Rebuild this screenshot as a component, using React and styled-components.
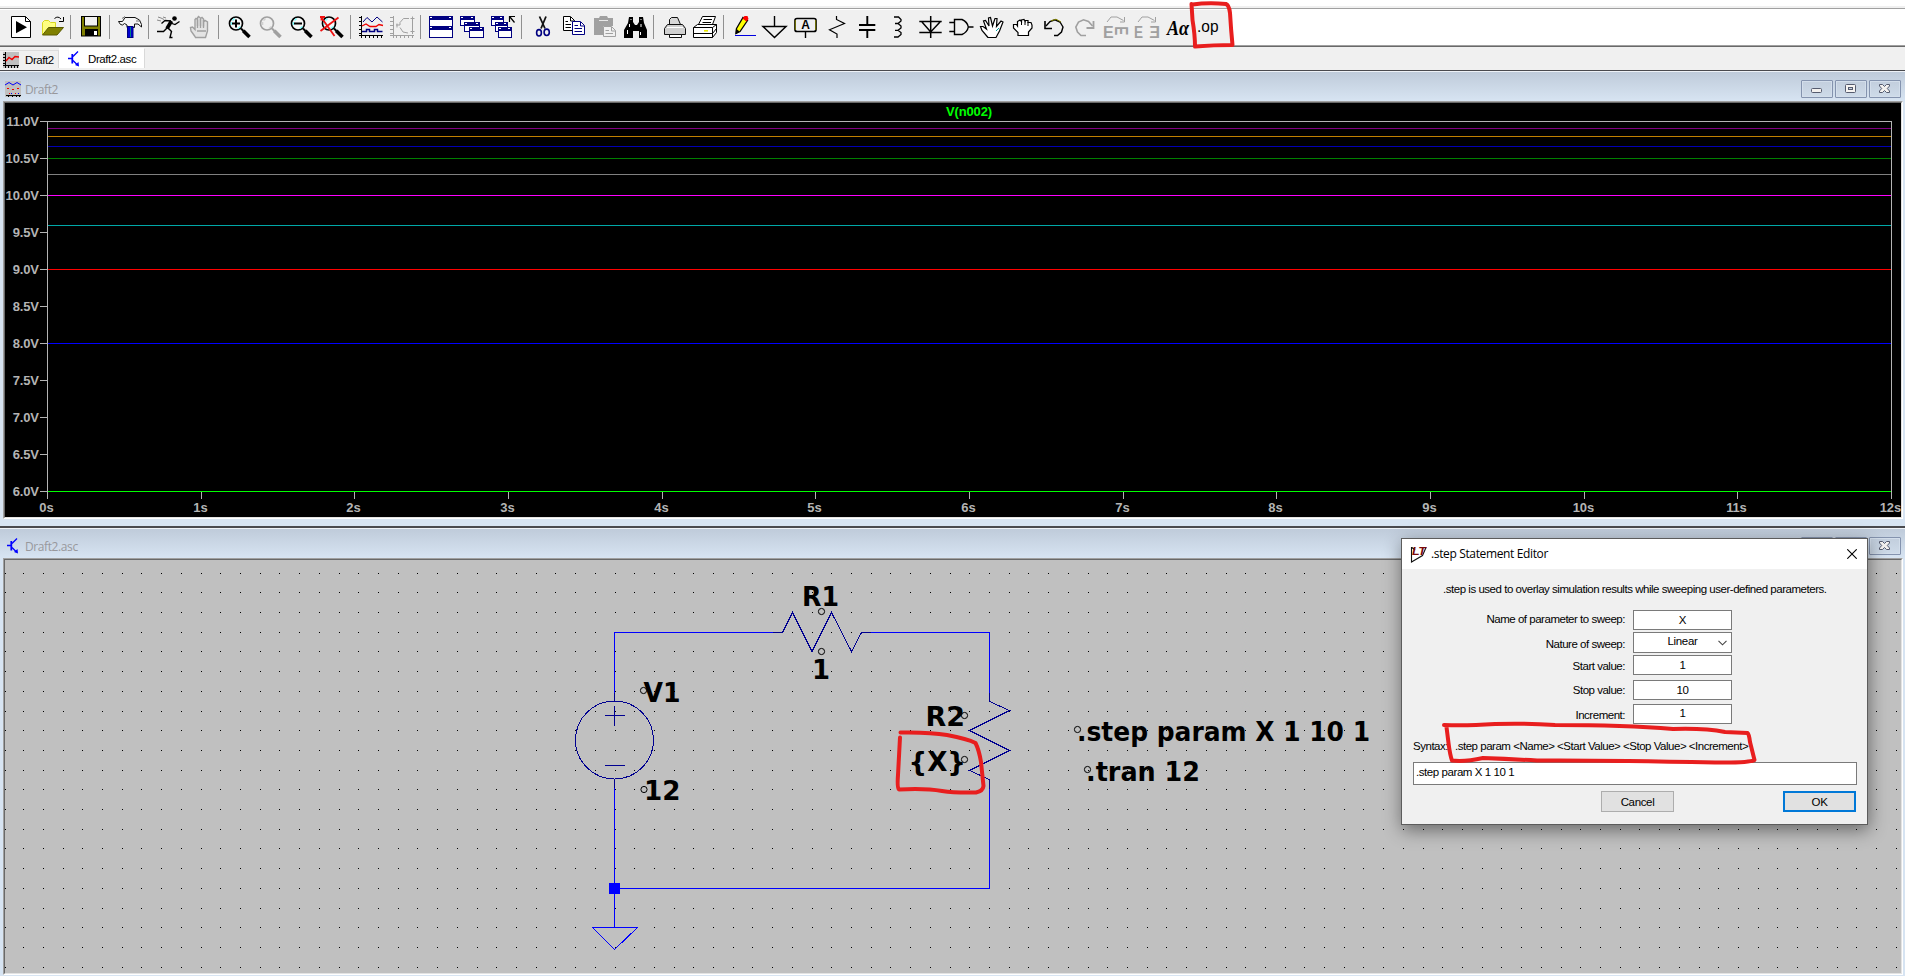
import React from "react";
import styled, { createGlobalStyle } from "styled-components";

const GlobalStyle = createGlobalStyle`
  * { box-sizing: border-box; }
  html, body { margin: 0; padding: 0; overflow: hidden; }
  body { font-family: "Liberation Sans", Arial, sans-serif; font-size: 11.5px; color: #000; background: #fff; }
  svg { display: block; }
`;

/* ---------- frame ---------- */

const Screen = styled.div`
  position: relative;
  width: 1905px;
  height: 976px;
  overflow: hidden;
  display: flex;
  flex-direction: column;
  background: #fff;
`;

const MenuEdge = styled.div`
  height: 9px;
  flex: none;
  border-top: 6px solid #fff;
  border-bottom: 1px solid #a0a0a0;
  background: #f0f0f0;
`;

const ToolbarRow = styled.div`
  height: 38px;
  flex: none;
  display: flex;
  background: #fff;
  border-top: 1px solid #fff;
  border-bottom: 1px solid #696969;
  box-shadow: inset 0 -1px 0 #a0a0a0;
`;

const Toolbar = styled.div`
  width: 1231px;
  height: 35px;
  padding: 4px 0 0 4px;
  display: flex;
  background: #f0f0f0;
`;

const ToolButton = styled.div`
  width: 31px;
  height: 26px;
  flex: none;
`;

const Divider = styled.div`
  width: 8px;
  height: 24px;
  flex: none;
  margin-top: 1px;
  background: linear-gradient(#909090, #909090) 4px 0 / 1px 100% no-repeat;
`;

const TabBar = styled.div`
  height: 23px;
  flex: none;
  display: flex;
  align-items: flex-start;
  background: #f0f0f0;
`;

const Tab = styled.div`
  display: flex;
  align-items: center;
  width: ${(p) => p.$width}px;
  height: ${(p) => (p.$active ? 20 : 18)}px;
  margin-top: ${(p) => (p.$active ? 1 : 3)}px;
  padding-left: ${(p) => (p.$active ? 9 : 3)}px;
  gap: ${(p) => (p.$active ? 8 : 6)}px;
  background: ${(p) => (p.$active ? "#fff" : "#f0f0f0")};
  border-top: 1px solid ${(p) => (p.$active ? "#fff" : "#dcdcdc")};
  border-right: 1px solid #d9d9d9;
  letter-spacing: -0.42px;
  line-height: 16px;
  white-space: nowrap;
`;

/* ---------- child windows ---------- */

const ChildWindow = styled.section`
  height: ${(p) => p.$height}px;
  flex: none;
  display: flex;
  flex-direction: column;
  border-top: ${(p) => p.$edge}px solid #4a4a4e;
  background: #d7e4f2;
`;

const TitleBar = styled.header`
  height: 30px;
  flex: none;
  display: flex;
  align-items: flex-start;
  padding: 9px 4px 0 5px;
  border-top: 1px solid #eef2f7;
  background: linear-gradient(#bfcbda, #d7e4f2);
`;

const TitleText = styled.span`
  flex: 1;
  margin: 0 0 0 4px;
  font-family: "Open Sans", "Noto Sans", sans-serif;
  font-size: 12px;
  line-height: 18px;
  letter-spacing: -0.4px;
  color: #98989c;
`;

const WindowButtons = styled.div`
  display: flex;
  gap: 2px;
  margin-top: -1px;
`;

const WindowButton = styled.div`
  width: 32px;
  height: 18px;
  display: flex;
  align-items: center;
  justify-content: center;
  border: 1px solid #8493ae;
  border-radius: 1px;
  box-shadow: inset 0 0 0 1px #d3deeb;
  background: linear-gradient(#c2cedd, #cedbe9);
`;

const Client = styled.div`
  width: 1900px;
  height: ${(p) => p.$height}px;
  margin-left: 3px;
  border: 1px solid;
  border-color: #a0a0a0 #fff #fff #a0a0a0;
  background: ${(p) => p.$fill};
`;

const ClientInner = styled.div`
  height: 100%;
  border: 1px solid;
  border-color: #696969 #e3e3e3 #e3e3e3 #696969;
  overflow: hidden;
`;

/* ---------- dialog ---------- */

const Dialog = styled.div`
  position: absolute;
  left: 1401px;
  top: 538px;
  width: 467px;
  height: 287px;
  display: flex;
  flex-direction: column;
  border: 1px solid #5c5c5c;
  background: #f0f0f0;
  box-shadow: 1px 5px 17px rgba(0, 0, 0, 0.46);
`;

const DialogTitle = styled.div`
  height: 30px;
  flex: none;
  display: flex;
  align-items: center;
  padding: 0 10px 0 8px;
  background: #fff;
  font-family: "Open Sans", "Noto Sans", sans-serif;
  font-size: 12px;
  letter-spacing: -0.36px;
`;

const DialogName = styled.span`
  flex: 1;
  margin-left: 4px;
  line-height: 18px;
  padding-bottom: 1px;
`;

const DialogBody = styled.div`
  flex: 1;
  display: flex;
  flex-direction: column;
  padding: 12px 10px 0 11px;
  line-height: 16px;
`;

const Hint = styled.p`
  margin: 0 0 13px 30px;
  letter-spacing: -0.47px;
  white-space: nowrap;
`;

const Field = styled.div`
  display: flex;
  justify-content: flex-start;
  align-items: center;
  gap: 8px;
  height: ${(p) => p.$height}px;
  margin-bottom: ${(p) => p.$after}px;
`;

const FieldLabel = styled.label`
  width: 212px;
  text-align: right;
  letter-spacing: -0.48px;
  padding-top: ${(p) => Math.max(p.$drop, 0)}px;
  padding-bottom: ${(p) => Math.max(-p.$drop, 0)}px;
`;

const FieldBox = styled.div`
  position: relative;
  width: 99px;
  height: 100%;
  border: 1px solid #7a7a7a;
  background: #fff;
  text-align: center;
  letter-spacing: -0.3px;
  line-height: ${(p) => p.$line}px;
`;

const Chevron = styled.svg`
  position: absolute;
  right: 4px;
  top: 7px;
`;

const Syntax = styled.div`
  display: flex;
  gap: 7px;
  margin-top: 10px;
  letter-spacing: -0.48px;
  white-space: nowrap;
`;

const Statement = styled.div`
  height: 23px;
  margin-top: 8px;
  padding: 0 2px;
  border: 1px solid #7a7a7a;
  background: #fff;
  line-height: 18px;
  letter-spacing: -0.43px;
`;

const Actions = styled.div`
  display: flex;
  gap: 109px;
  margin: 6px 1px 0 188px;
`;

const PushButton = styled.button`
  width: 73px;
  height: 21px;
  padding: 0;
  font: inherit;
  line-height: 16px;
  letter-spacing: -0.35px;
  color: #000;
  border: ${(p) => (p.$primary ? "2px solid #0078d7" : "1px solid #adadad")};
  background: #e1e1e1;
`;

const Markup = styled.svg`
  position: absolute;
  left: 0;
  top: 0;
  pointer-events: none;
`;

/* ---------- toolbar drawings ---------- */

const G = "#a0a0a0";
const N = "#000080";

const Glass = ({ c = "#000", shine = "#7fffff", children }) => (
  <>
    <circle cx="14" cy="9.5" r="6.5" fill={c === G ? "none" : "#f8f8f8"} stroke={c} strokeWidth="1.7" />
    <path d="M9.5 11V8M10.5 6.5l2-2M16 14.5l2.5-2" stroke={shine} strokeWidth="1.6" fill="none" />
    <path d="M19 14.5l2.5 2.5" stroke={c} strokeWidth="2" />
    <path d="M21.2 16.7L27.5 23" stroke={c} strokeWidth="3.6" />
    {children}
  </>
);

const MiniWindow = ({ x, y, w = 15, h = 10 }) => (
  <g>
    <rect x={x + 0.5} y={y + 0.5} width={w - 1} height={h - 1} fill="#fff" stroke={N} />
    <rect x={x} y={y} width={w} height="4" fill={N} />
    <rect x={x + 1} y={y + 1} width="2" height="1" fill="#fff" />
    <rect x={x + w - 4} y={y + 1} width="2" height="1" fill="#fff" />
  </g>
);

const tools = [
  [
    <>
      <path d="M7.5 2.5H21.5L26.5 7.5V23.5H7.5Z" fill="#fff" stroke="#000" />
      <path d="M21.5 2.5V7.5H26.5" fill="none" stroke="#000" />
      <path d="M12 7L23 13.2L12 19.3Z" />
    </>,
    <>
      <path d="M7.5 20.5V8.5L9.5 6.5H13.5L15.5 8.5H20.5V13" fill="#ffff80" stroke="#d8d820" />
      <path d="M7.5 21L13.5 13.5H28.5L22 21Z" fill="#808000" stroke="#5a5a00" />
      <path d="M19.5 4.5Q23 1.5 26 5M28.5 3V7.5H24" fill="none" stroke="#000" />
    </>,
  ],
  [
    <>
      <rect x="7.5" y="2.5" width="19" height="19.5" fill="#808000" stroke="#000" />
      <rect x="10.5" y="2.5" width="13" height="9.5" fill="#f0f0f0" stroke="#000" />
      <rect x="11" y="15" width="13" height="7" />
      <rect x="20" y="17" width="3" height="4" fill="#fff" />
    </>,
  ],
  [
    <>
      <path d="M5.5 7.5H9.5L12 3.5H22L26.5 6L28.5 10.5V13L25 10H21.5V13.5H14V11L11.5 9.5L9.5 11L7.5 10.5Z" fill="#f4f4f4" stroke="#111" />
      <path d="M9 4.5l3-2M23 7h4" stroke="#777" />
      <rect x="14.5" y="12.5" width="5.5" height="11" fill="#0000d0" stroke={N} />
      <path d="M17.5 13v10" stroke="#008080" />
    </>,
  ],
  [
    <>
      <circle cx="22.5" cy="4.5" r="2.3" />
      <path d="M19.5 7L15 14.5" stroke="#000" strokeWidth="3.6" />
      <path d="M19 7L13 6.5L9.5 9.5M18.5 9L23 10.5L27.5 7.5" fill="none" stroke="#000" strokeWidth="1.3" />
      <path d="M15 14L11.5 17.5H5M16 14L19.5 17.5L18 23.5H20.5" fill="none" stroke="#000" strokeWidth="1.4" />
      <path d="M6 3l3 1l3 1.5M5 6l4 1M11 3l3 1" fill="none" stroke="#888" />
    </>,
    <>
      <path d="M12 22.5L8 17L7.5 13.5L9.5 13L12 15.5V5.5L13 4.5L14.5 5.5V12V4L15.5 2.5L17.5 4V12V4.5L19 3.5L20.5 5V12.5V8L22 6.5L24.5 8V17L22.5 23.5H12.5Z" fill="#e4e4e4" stroke={G} strokeWidth="1.4" />
      <path d="M14.5 6v8M17.5 5v9M20.5 6v8M14 17h9" stroke={G} strokeWidth="1.3" />
    </>,
  ],
  [
    <Glass><path d="M10 9.5h8M14 5.5v8" stroke="#000" strokeWidth="2" /></Glass>,
    <Glass c={G} shine="#d0d0d0" />,
    <Glass><path d="M10 9.5h8" stroke="#000" strokeWidth="2" /></Glass>,
    <Glass>
      <path d="M6 3L19.5 22M23.5 3.5L5.5 17M6.5 2.5v4M5 3h5" stroke="#ee1111" strokeWidth="1.8" fill="none" />
    </Glass>,
  ],
  [
    <>
      <path d="M7.5 2V24M5 3.5H8M5 7.5H8M5 11.5H8M5 15.5H8M5 19.5H8M5 21.5H29M11.5 21V24M15.5 21V24M19.5 21V24M23.5 21V24M27.5 21V24" stroke="#000" fill="none" />
      <path d="M9 8L13 3.5L18 8L23 3L28.5 8" stroke={N} fill="none" />
      <path d="M8 12L12 10L16 12.5H22L25 10.5L29 11.5" stroke="#ee0000" fill="none" strokeWidth="1.3" />
      <path d="M8 17.5H12.5V15.5H15.5V17.5H20.5V15.5H23.5V17.5H28.5" stroke={N} fill="none" strokeWidth="1.5" />
    </>,
    <>
      <path d="M8.5 2V24M5 3.5H8M5 7.5H8M5 11.5H8M5 15.5H8M5 19.5H8M5 21.5H29M11.5 21V24M15.5 21V24M19.5 21V24M23.5 21V24M27.5 21V24" stroke={G} fill="none" />
      <path d="M27.5 2.5V20M25.5 4.5h4M25.5 17.5h4M11 11H15V8.5L18.5 4.5H24M15 13.5L18 18L23 19M12 9.5v4" stroke={G} fill="none" />
    </>,
  ],
  [
    <>
      <MiniWindow x={5} y={2} w={24} h={11} />
      <MiniWindow x={5} y={12} w={24} h={12} />
    </>,
    <>
      <MiniWindow x={5} y={2} />
      <MiniWindow x={9} y={8} w={16} />
      <MiniWindow x={14} y={13} w={15} h={11} />
    </>,
    <>
      <MiniWindow x={5} y={2} w={13} />
      <MiniWindow x={9} y={8} w={13} />
      <MiniWindow x={12} y={13} w={14} h={11} />
      <path d="M23.5 8V2.5H29M24 3L28.5 8.5" stroke="#000" fill="none" strokeWidth="1.2" />
    </>,
  ],
  [
    <>
      <path d="M14.5 2.5L20 14.5M21 2.5L16 14.5" stroke="#111" strokeWidth="1.8" />
      <ellipse cx="14" cy="18.8" rx="2.4" ry="3.2" fill="none" stroke={N} strokeWidth="1.6" />
      <ellipse cx="21.7" cy="18.3" rx="2.6" ry="3.2" fill="none" stroke={N} strokeWidth="1.6" />
    </>,
    <>
      <path d="M7.5 2.5H14.5L18.5 6.5V16.5H7.5Z" fill="#fff" stroke="#000" />
      <path d="M9.5 7.5H12M9.5 10.5H15M9.5 13.5H15M14.5 3v4h4" stroke="#000" fill="none" />
      <path d="M16.5 7.5H24.5L28.5 11.5V20.5H16.5Z" fill="#fff" stroke={N} />
      <path d="M18.5 11.5H22M18.5 14.5H26M18.5 17.5H26M24.5 8v4h4" stroke={N} fill="none" />
    </>,
    <>
      <path d="M7 4H12L13 2H20L21 4H26V12H16V21H7Z" fill={G} />
      <path d="M12 6.5H21" stroke="#e8e8e8" />
      <path d="M16.5 12.5H24.5L28.5 16.5V22.5H16.5Z" fill="#f0f0f0" stroke={G} />
      <path d="M18.5 16.5H22M18.5 19.5H26M24.5 13v4h4" stroke={G} fill="none" />
    </>,
    <>
      <path d="M11 3H15V8L17 11H19L21 8V3H25L26 9L29 16V24H21V17H15V24H6V16L10 9Z" />
      <path d="M12.5 5.5h1M22.5 5.5h1M11.5 10v3M9.5 16v4M23 10v3M22.5 18v3" stroke="#fff" />
    </>,
  ],
  [
    <>
      <path d="M12.5 10.5V5.5L14.5 3.5H20.5L23.5 10.5" fill="#d8d8d8" stroke="#111" />
      <path d="M10.5 10.5H25.5L28.5 14.5V20.5H7.5V14.5Z" fill="#d0d0d0" stroke="#111" />
      <path d="M10 13.5h16" stroke="#fff" />
      <path d="M12.5 20.5H24.5V23.5H12.5Z" fill="#fff" stroke="#111" />
    </>,
    <>
      <path d="M10.5 10.5L14.5 2.5H27.5L24.5 10.5" fill="#fff" stroke="#000" />
      <path d="M15.5 5.5H24M14.5 8.5H23" stroke="#000" />
      <path d="M5.5 13.5L9.5 10.5H28.5V18.5L24.5 23.5H5.5Z" fill="#fff" stroke="#000" />
      <path d="M5.5 13.5H24.5V23.5M24.5 13.5L28.5 10.5M5.5 19.5H24.5L28.5 14.5" fill="none" stroke="#000" />
      <path d="M16 16.8H20" stroke="#e8e800" strokeWidth="1.6" />
    </>,
  ],
  [
    <>
      <path d="M9.5 14.5L16 3.5L20.5 6.5L13 17.5L9 19.5Z" fill="#ffff00" stroke="#000" strokeWidth="1.3" />
      <path d="M15.5 4.5L17.5 2H20.5L21.5 5L19.5 7.5Z" fill="#ff0000" />
      <path d="M9 14.5L12.5 17.5L8.5 20.5Z" />
      <path d="M8 21.5H29" stroke="#0000e0" />
    </>,
    <>
      <path d="M16.5 2V12.5" stroke="#000" strokeWidth="1.4" />
      <path d="M5 12.5H28L16.5 23.5Z" fill="none" stroke="#000" strokeWidth="1.5" />
    </>,
    <>
      <rect x="6" y="4.5" width="21" height="13" rx="2" fill="#f0f0f0" stroke="#000" strokeWidth="1.7" />
      <path d="M6.3 6v10M26.7 6v10" stroke="#808000" />
      <text x="16.5" y="15.3" fontSize="12" fontWeight="bold" textAnchor="middle">A</text>
      <path d="M16.5 18V24" stroke="#000" strokeWidth="1.4" />
    </>,
    <path d="M16.5 2V5.5L24.5 9.5L9.5 15.8L17 20V24" fill="none" stroke="#000" strokeWidth="1.2" />,
    <path d="M16.3 2V11M16.3 16V24M8 11H24.3M8 16H24.3" fill="none" stroke="#000" strokeWidth="1.9" />,
    <path d="M12 3H16.5L19 5.5V7L16 9.5H13H16L19 12V14L16 16.3H13H16L19 18.5V20.5L16 23H12" fill="none" stroke="#000" strokeWidth="1.3" />,
    <path d="M17.7 2V24M6.3 7.5H28.7M9 8L17.7 18L27 8M6.3 18.5H28.7" fill="none" stroke="#000" strokeWidth="1.5" />,
    <path d="M10.5 5.5H18Q23.5 8 24.3 13Q23.5 18 18 20.5H10.5ZM5.3 8.5H10.5M5.3 17.5H10.5M24.3 13H29.5" fill="none" stroke="#000" strokeWidth="1.4" />,
    <>
      <path d="M13 23.5L7 16.5L5.5 12.5H8L11.5 15L8.5 7L10.5 6.5L14 12L13.5 4L15.5 3.5L17.5 12L20 4.5L22 4.5L21.5 12.5L26 7L28 8L24.5 17L21 23.5Z" fill="#fff" stroke="#000" strokeWidth="1.2" />
      <path d="M21 17l3-3" stroke="#00a0a0" />
    </>,
    <>
      <path d="M12 21.5V18.5L7.5 14V10.5H10.5L11.5 12V7.5L14 6L15.5 7.5V6L18 5.5L19 7V6.5L22 6.5V8.5L25 8.5L26 11V14L22.5 18V21.5Z" fill="#fff" stroke="#000" strokeWidth="1.2" />
      <path d="M15.5 7v4M19 7v4M22 8v4" stroke="#000" />
    </>,
    <>
      <path d="M9 12L13 7.5L18 5.8L23 8L26 13L24.5 18L20.5 21.5H17" fill="none" stroke="#000" strokeWidth="1.4" />
      <path d="M14 6.8L19 5.2L24 8" fill="none" stroke="#808000" />
      <path d="M8 7V14.5H15" fill="none" stroke="#000" strokeWidth="1.6" />
    </>,
    <>
      <path d="M24.5 12L20.5 7.5L15.5 5.8L10.5 8L7.8 13L9.5 18L13 21.5H18" fill="none" stroke={G} strokeWidth="1.6" />
      <path d="M25.5 7V14H18.5" fill="none" stroke={G} strokeWidth="1.8" />
    </>,
    <>
      <path d="M8 8L12 3H18L24.5 6.5M25.5 3V8H21" fill="none" stroke={G} />
      <text x="4" y="23.5" fontSize="16" fontWeight="bold" fill={G}>E</text>
      <text transform="translate(15.6 12.2) scale(1 .75) rotate(90)" x="0" y="0" fontSize="18" fontWeight="bold" fill={G}>E</text>
    </>,
    <>
      <path d="M8 8L12 3H18L24.5 6.5M25.5 3V8H21" fill="none" stroke={G} />
      <text x="4" y="23.5" fontSize="16" fontWeight="bold" fill={G} textLength="9" lengthAdjust="spacingAndGlyphs">E</text>
      <text transform="scale(-1 1)" x="-30" y="23.5" fontSize="16" fontWeight="bold" fill={G}>E</text>
    </>,
    <text x="6" y="20.8" fontFamily="Liberation Serif, serif" fontSize="20" fontWeight="bold" fontStyle="italic" textLength="22" lengthAdjust="spacingAndGlyphs">Aα</text>,
    <text x="5" y="18" fontFamily="Liberation Sans, sans-serif" fontSize="16" textLength="21.5" lengthAdjust="spacingAndGlyphs">.op</text>,
  ],
];

/* ---------- small icons ---------- */

const GraphIcon = () => (
  <svg width="16" height="16" viewBox="0 0 16 16">
    <rect width="16" height="16" fill="#c0c0c0" />
    <path d="M2.5 0V16M0 2.5H2M0 5.5H2M0 8.5H2M0 11.5H2M0 13.5H16M5.5 13V16M8.5 13V16M11.5 13V16M14.5 13V16" stroke="#000" shapeRendering="crispEdges" />
    <path d="M3 9L6 5.5L9 7.5L12 4.5L16 5" fill="none" stroke="#f00000" strokeWidth="1.4" />
  </svg>
);

const WavesIcon = () => (
  <svg width="16" height="16" viewBox="0 0 16 16">
    <rect width="16" height="16" fill="#c0c0c0" />
    <path d="M0 4L4 1.5L8 4L12 1.5L16 4" fill="none" stroke="#0000ff" />
    <path d="M2 7.5h2M7 8.5h2M12 7.5h2M4 12.5h1M10 12.5h1" stroke="#f00000" />
    <path d="M1 14.5h15M3.5 14v2M7.5 14v2M11.5 14v2M14.5 14v2" stroke="#000" />
    <path d="M6 12.5h1M13 12.5h1" stroke="#0000ff" />
  </svg>
);

const TransistorIcon = ({ width = 12 }) => (
  <svg width={width} height="16" viewBox="0 0 12 16">
    <path d="M0 7.5H4M5 5.5L10 .5M5 9.5L9.5 14" stroke="#0000ff" strokeWidth="1.3" fill="none" />
    <path d="M4.3 3V12.5" stroke="#0000ff" strokeWidth="1.8" />
    <path d="M11 15.5L10.5 11L7 14Z" fill="#0000ff" />
  </svg>
);

const MinimizeGlyph = () => (
  <svg width="12" height="12" viewBox="0 0 12 12">
    <rect x="0.5" y="5.5" width="10" height="4" rx="1" fill="#f2f0ee" stroke="#555b6e" />
  </svg>
);
const RestoreGlyph = () => (
  <svg width="12" height="12" viewBox="0 0 12 12">
    <rect x="0.5" y="1.5" width="10" height="8" rx="1" fill="#f6f4f2" stroke="#555b6e" />
    <rect x="3.5" y="4.5" width="4" height="2" fill="#c8d2e0" stroke="#555b6e" />
  </svg>
);
const CloseGlyph = () => (
  <svg width="12" height="12" viewBox="0 0 12 12">
    <path d="M.5 1.5H3.5L5.5 3.5L7.5 1.5H10.5V3L8.3 5.5L10.5 8V9.5H7.5L5.5 7.5L3.5 9.5H.5V8L2.7 5.5L.5 3Z" fill="#f4f2f0" stroke="#555b6e" />
  </svg>
);

const ProgramMark = () => (
  <svg width="17" height="17" viewBox="0 0 17 17">
    <path d="M1.5 1V16L12.5 9.5L16 1.5M2 1.5L5 4" fill="none" stroke="#111" strokeWidth="1.1" />
    <text x="2" y="9" fontFamily="Liberation Sans, sans-serif" fontSize="10.5" fontWeight="bold" fontStyle="italic" fill="#7a0808" textLength="13.5" lengthAdjust="spacingAndGlyphs">LT</text>
  </svg>
);

const WindowHeader = ({ icon, title }) => (
  <TitleBar>
    {icon}
    <TitleText>{title}</TitleText>
    <WindowButtons>
      <WindowButton><MinimizeGlyph /></WindowButton>
      <WindowButton><RestoreGlyph /></WindowButton>
      <WindowButton><CloseGlyph /></WindowButton>
    </WindowButtons>
  </TitleBar>
);

/* ---------- waveform plot ---------- */

const traces = [
  [128, "#800080"], [136, "#c08000"], [146, "#0000b4"], [158, "#008000"], [174, "#808080"],
  [195, "#ff00ff"], [225, "#00a8a8"], [269, "#ff0000"], [343, "#0000ff"], [491, "#00ff00"],
];

const AxisText = styled.text`
  font: bold 13px "Liberation Sans", Arial, sans-serif;
  fill: ${(p) => p.$fill || "#b4b4b4"};
  letter-spacing: -0.15px;
`;

const Plot = () => {
  const volts = Array.from({ length: 11 }, (_, i) => 11 - i * 0.5);
  const seconds = Array.from({ length: 13 }, (_, i) => i);
  const sx = (s) => Math.round(47 + (s * 1844) / 12);
  return (
    <svg width="1896" height="414" viewBox="5 103 1896 414">
      <AxisText x="969" y="116" textAnchor="middle" $fill="#00ff00">V(n002)</AxisText>
      <g shapeRendering="crispEdges" fill="#b4b4b4">
        <rect x="47" y="121" width="1845" height="1" />
        <rect x="47" y="121" width="1" height="378" />
        <rect x="1891" y="121" width="1" height="378" />
        {volts.map((v) => <rect key={v} x="40" y={121 + (11 - v) * 74} width="7" height="1" />)}
        {seconds.map((s) => <rect key={s} x={sx(s)} y="492" width="1" height="7" />)}
        {traces.map(([y, c]) => <rect key={y} x="48" y={y} width="1843" height="1" fill={c} />)}
      </g>
      {volts.map((v) => (
        <AxisText key={v} x="38.8" y={125.5 + (11 - v) * 74} textAnchor="end">{v.toFixed(1)}V</AxisText>
      ))}
      {seconds.map((s) => (
        <AxisText key={s} x={sx(s) - 0.6} y="511.6" textAnchor="middle">{s}s</AxisText>
      ))}
    </svg>
  );
};

/* ---------- schematic ---------- */

const PITCH = 19.71;
const gridDots = (() => {
  let d = "";
  for (let j = 0; j < 21; j++) {
    const y = Math.floor(573.05 + PITCH * j);
    for (let i = 0; i < 97; i++) d += `M${Math.max(5, Math.floor(4 + PITCH * i))} ${y}h1v1h-1z`;
  }
  return d;
})();

const anchors = [
  [821.5, 611.5], [821.5, 651.5], [643.5, 690.5], [644, 789.5],
  [964.5, 715.5], [964.5, 759.5], [1077.5, 729.5], [1087.5, 769.5],
];

const labels = [
  ["R1", 802, 606, 37], ["1", 812, 679, 18], ["V1", 643.5, 702, 37], ["12", 644, 800, 36.5],
  ["R2", 925.5, 726, 39.5], ["{X}", 908.5, 771, 57.5],
  [".step param X 1 10 1", 1077, 741, 293], [".tran 12", 1086, 781, 114],
];

const PartText = styled.text`
  font: bold 26px "DejaVu Sans", Verdana, sans-serif;
`;

const Schematic = () => (
  <svg width="1896" height="413" viewBox="5 560 1896 413">
    <path d={gridDots} fill="#000" shapeRendering="crispEdges" />
    <g fill="none" stroke="#0000ff" shapeRendering="crispEdges">
      <path d="M614.5 693V632.5H773M871 632.5H989.5V693M989.5 789V888.5H614.5M614.5 788V927.5" />
      <path d="M592.5 927.5H637.5L614.5 949.5Z" />
      <rect x="609" y="883" width="11" height="11" fill="#0000ff" stroke="none" />
    </g>
    <g fill="none" stroke="#000090" shapeRendering="crispEdges">
      <path d="M773 632.5H782.5L792.5 612.5L812 651.5L831.5 612.5L851.5 651.5L861.5 632.5H871" />
      <path d="M989.5 693V701.5L1009.5 710.5L969.5 730.5L1009.5 750.5L969.5 770.5L989.5 779.5V789" />
      <circle cx="614.5" cy="740" r="39" />
      <path d="M614.5 693V701M614.5 779V788M605 715.5H625M614.5 706V726M605 765.5H625" />
    </g>
    {labels.map(([t, x, y, w]) => (
      <PartText key={t} x={x} y={y} textLength={w} lengthAdjust="spacingAndGlyphs">{t}</PartText>
    ))}
    {anchors.map(([x, y]) => (
      <circle key={`${x}-${y}`} cx={x} cy={y} r="3.1" fill="none" stroke="#000" />
    ))}
  </svg>
);

/* ---------- dialog contents ---------- */

const fields = [
  { label: "Name of parameter to sweep:", value: "X", height: 20, after: 2, drop: -2, line: 18 },
  { label: "Nature of sweep:", value: "Linear", height: 21, after: 2, drop: 2, line: 17, select: true },
  { label: "Start value:", value: "1", height: 20, after: 5, drop: 1, line: 18 },
  { label: "Stop value:", value: "10", height: 20, after: 4, drop: 0, line: 18 },
  { label: "Increment:", value: "1", height: 20, after: 4, drop: 2, line: 17 },
];

const StepDialog = () => (
  <Dialog>
    <DialogTitle>
      <ProgramMark />
      <DialogName>.step Statement Editor</DialogName>
      <svg width="10" height="10" viewBox="0 0 10 10">
        <path d="M.3 .3L9.7 9.7M9.7 .3L.3 9.7" stroke="#000" strokeWidth="1.1" />
      </svg>
    </DialogTitle>
    <DialogBody>
      <Hint>.step is used to overlay simulation results while sweeping user-defined parameters.</Hint>
      {fields.map((f) => (
        <Field key={f.label} $height={f.height} $after={f.after}>
          <FieldLabel $drop={f.drop}>{f.label}</FieldLabel>
          <FieldBox $line={f.line}>
            {f.value}
            {f.select && (
              <Chevron width="9" height="6" viewBox="0 0 9 6">
                <path d="M.5 .8L4.5 4.8L8.5 .8" fill="none" stroke="#444" strokeWidth="1.1" />
              </Chevron>
            )}
          </FieldBox>
        </Field>
      ))}
      <Syntax>
        <span>Syntax:</span>
        <span>.step param &lt;Name&gt; &lt;Start Value&gt; &lt;Stop Value&gt; &lt;Increment&gt;</span>
      </Syntax>
      <Statement>.step param X 1 10 1</Statement>
      <Actions>
        <PushButton>Cancel</PushButton>
        <PushButton $primary>OK</PushButton>
      </Actions>
    </DialogBody>
  </Dialog>
);

const HandMarks = () => (
  <Markup width="1905" height="976" viewBox="0 0 1905 976">
    <g fill="none" stroke="#e81e1e" strokeWidth="4" strokeLinejoin="round" strokeLinecap="round">
      <path d="M1192.5 4.5Q1208 2.5 1226 4Q1229 5 1230 13Q1231 30 1232.5 45Q1214 45 1195 46.5Q1195 35 1192.5 20L1191.5 4" />
      <path d="M900.5 732.5Q930 732 947 735Q968 739 975.5 743Q979 750 981 762L983.5 786Q983 791 976 792.5Q955 793 942 791Q925 788 899 789.5Q897 788 898 775L900 737.5" />
      <path d="M1444 725Q1465 726 1495 724Q1525 723 1555 725Q1625 725 1673 729Q1705 728 1725 732L1747.5 733Q1749 734 1750 742L1754.5 760Q1750 763 1715 762.5Q1600 760 1537 760.5Q1510 759 1483 758Q1465 762 1452 760.5Q1450 755 1448.5 743L1446.5 727" />
    </g>
  </Markup>
);

export default function App() {
  return (
    <>
      <GlobalStyle />
      <Screen>
        <MenuEdge />
        <ToolbarRow>
          <Toolbar>
            {tools.map((group, g) => (
              <React.Fragment key={g}>
                {g > 0 && <Divider />}
                {group.map((drawing, i) => (
                  <ToolButton key={i}>
                    <svg width="31" height="26" viewBox="0 0 31 26">{drawing}</svg>
                  </ToolButton>
                ))}
              </React.Fragment>
            ))}
          </Toolbar>
        </ToolbarRow>
        <TabBar>
          <Tab $width={59}><GraphIcon />Draft2</Tab>
          <Tab $width={86} $active><TransistorIcon />Draft2.asc</Tab>
        </TabBar>
        <ChildWindow $height={456} $edge={1}>
          <WindowHeader icon={<WavesIcon />} title="Draft2" />
          <Client $height={418} $fill="#000"><ClientInner><Plot /></ClientInner></Client>
        </ChildWindow>
        <ChildWindow $height={450} $edge={2}>
          <WindowHeader icon={<TransistorIcon width={16} />} title="Draft2.asc" />
          <Client $height={417} $fill="#c0c0c0"><ClientInner><Schematic /></ClientInner></Client>
        </ChildWindow>
        <StepDialog />
        <HandMarks />
      </Screen>
    </>
  );
}
